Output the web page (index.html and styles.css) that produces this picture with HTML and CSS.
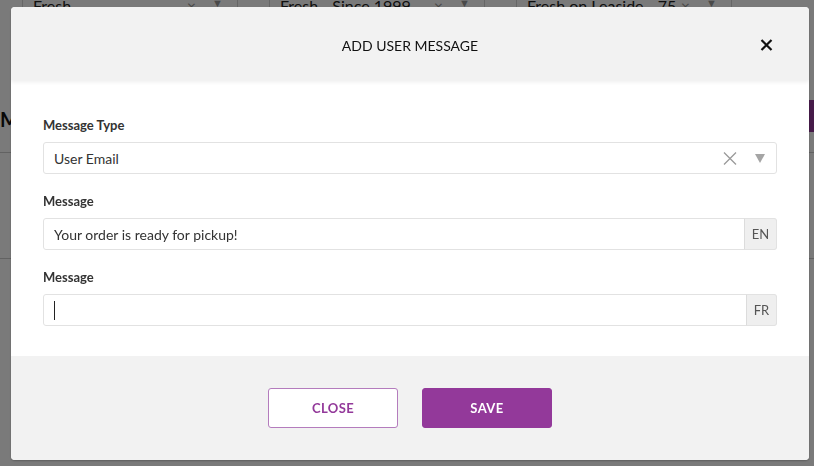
FILE: index.html
```html
<!DOCTYPE html>
<html lang="en">
<head>
  <meta charset="UTF-8">
  <title>Add User Message</title>
  <link rel="stylesheet" href="styles.css">
</head>
<body>
  <!-- page behind the modal -->
  <div class="page">
    <div class="filters">
      <div class="filter"><span>Fresh</span><span class="filter-icons"><span>&times;</span><span class="arrow">&#9660;</span></span></div>
      <div class="filter"><span>Fresh - Since 1999</span><span class="filter-icons"><span>&times;</span><span class="arrow">&#9660;</span></span></div>
      <div class="filter"><span>Fresh on Leaside - 75</span><span class="filter-icons"><span>&times;</span><span class="arrow">&#9660;</span></span></div>
    </div>
    <div class="toolbar">
      <h1 class="page-title">Messages</h1>
      <button class="add-btn">NEW</button>
    </div>
    <div class="table">
      <div class="table-row"></div>
    </div>
  </div>

  <div class="overlay">
    <div class="modal">
      <div class="modal-header">
        <span></span>
        <h2 class="modal-title">ADD USER MESSAGE</h2>
        <button class="modal-close" aria-label="Close">
          <svg width="13" height="12" viewBox="0 0 13 12"><path d="M1.5 1 L11.5 11 M11.5 1 L1.5 11" stroke="#111" stroke-width="2.2" fill="none"/></svg>
        </button>
      </div>

      <div class="modal-body">
        <div class="form-group">
          <label class="form-label">Message Type</label>
          <div class="select">
            <span class="select-value">User Email</span>
            <span class="select-clear">
              <svg width="14" height="13" viewBox="0 0 14 13"><path d="M1 0.5 L13 12.5 M13 0.5 L1 12.5" stroke="#9a9a9a" stroke-width="1.3" fill="none"/></svg>
            </span>
            <span class="select-arrow">
              <svg width="10" height="9" viewBox="0 0 10 9"><path d="M0 0 H10 L5 9 Z" fill="#a5a5a5"/></svg>
            </span>
          </div>
        </div>

        <div class="form-group">
          <label class="form-label">Message</label>
          <div class="input-group">
            <div class="input">Your order is ready for pickup!</div>
            <span class="input-addon">EN</span>
          </div>
        </div>

        <div class="form-group">
          <label class="form-label">Message</label>
          <div class="input-group">
            <div class="input"><span class="caret"></span></div>
            <span class="input-addon addon-fr">FR</span>
          </div>
        </div>
      </div>

      <div class="modal-footer">
        <button class="btn btn-outline">CLOSE</button>
        <button class="btn btn-primary">SAVE</button>
      </div>
    </div>
  </div>
</body>
</html>
```

FILE: styles.css
```css
*{
  box-sizing: border-box;
}
body{
  margin: 0;
  font-family: Lato, "Open Sans", Arial, sans-serif;
  color: #333;
  background-color: #fff;
  overflow: hidden;
}

/* 뒤쪽 페이지 */
.filters{
  display: flex;
  gap: 31px;
  padding-left: 22px;
  margin-top: -12px;
}
.filter{
  display: flex;
  align-items: center;
  justify-content: space-between;
  width: 216px;
  height: 34px;
  padding: 0 10px;
  border: 1px solid #d6d6d6;
  font-size: 16px;
  color: #222;
}
.filter-icons{
  display: flex;
  gap: 16px;
  color: #999;
  margin-right: 4px;
}
.filter-icons .arrow{
  font-size: 11px;
}
.toolbar{
  display: flex;
  align-items: center;
  justify-content: space-between;
  height: 32px;
  margin-top: 78px;
}
.page-title{
  margin: 0;
  font-size: 20px;
  font-weight: 700;
  color: #111;
  padding-top: 6px;
}
.add-btn{
  width: 120px;
  height: 32px;
  border: none;
  background-color: #93399a;
  color: #fff;
}
.table{
  margin-top: 20px;
  border-top: 1px solid #ccc;
}
.table-row{
  height: 106px;
  border-bottom: 1px solid #ccc;
}

/* 모달 */
.overlay{
  position: fixed;
  top: 0;
  left: 0;
  right: 0;
  bottom: 0;
  display: flex;
  padding: 7px 5px 6px 11px;
  background-color: rgba(0, 0, 0, 0.52);
}
.modal{
  flex: 1;
  display: flex;
  flex-direction: column;
  border-radius: 4px;
  overflow: hidden;
  background-color: #f2f2f2;
  box-shadow: 0 1px 2px rgba(0, 0, 0, 0.25);
}
.modal-header{
  display: grid;
  grid-template-columns: 1fr auto 1fr;
  align-items: center;
  height: 73px;
  background-color: #f2f2f2;
  box-shadow: 0 2px 4px rgba(0, 0, 0, 0.07);
  position: relative;
  z-index: 1;
}
.modal-title{
  margin: 0;
  font-size: 14px;
  font-weight: 400;
  color: #111;
  padding-top: 3px;
}
.modal-close{
  justify-self: end;
  margin-right: 36px;
  margin-top: 3px;
  padding: 0;
  border: none;
  background: none;
  display: flex;
}
.modal-body{
  flex: 1;
  display: flex;
  flex-direction: column;
  gap: 18px;
  padding: 36px 32px 0;
  background-color: #fff;
}
.form-group{
  display: flex;
  flex-direction: column;
  gap: 8px;
}
.form-label{
  font-size: 13px;
  line-height: 18px;
  font-weight: 700;
  color: #333;
}
.select,
.input-group{
  display: flex;
  align-items: center;
  height: 32px;
}
.select{
  padding: 0 11px 0 10px;
  border: 1px solid #e2e2e2;
  border-radius: 3px;
  font-size: 14px;
}
.select-value{
  flex: 1;
}
.select-clear{
  display: flex;
  margin-right: 18px;
}
.select-arrow{
  display: flex;
}
.input{
  flex: 1;
  display: flex;
  align-items: center;
  height: 100%;
  padding: 0 10px;
  border: 1px solid #e2e2e2;
  border-radius: 3px 0 0 3px;
  font-size: 14px;
  color: #333;
}
.caret{
  width: 1px;
  height: 19px;
  background-color: #222;
}
.input-addon{
  display: flex;
  align-items: center;
  justify-content: center;
  width: 33px;
  height: 100%;
  border: 1px solid #e2e2e2;
  border-left: 1px solid #dcdcdc;
  margin-left: -1px;
  border-radius: 0 3px 3px 0;
  background-color: #efefef;
  font-size: 13px;
  color: #555;
}
.addon-fr{
  width: 31px;
}
.modal-footer{
  display: flex;
  align-items: center;
  justify-content: center;
  gap: 24px;
  height: 104px;
  background-color: #f2f2f2;
}
.btn{
  width: 130px;
  height: 40px;
  border-radius: 3px;
  font-family: Lato, "Open Sans", Arial, sans-serif;
  font-size: 13px;
  font-weight: 700;
  letter-spacing: 0.4px;
}
.btn-outline{
  border: 1px solid #b47cbd;
  background-color: #fff;
  color: #93399a;
}
.btn-primary{
  border: 1px solid #93399a;
  background-color: #93399a;
  color: #fff;
}
```
